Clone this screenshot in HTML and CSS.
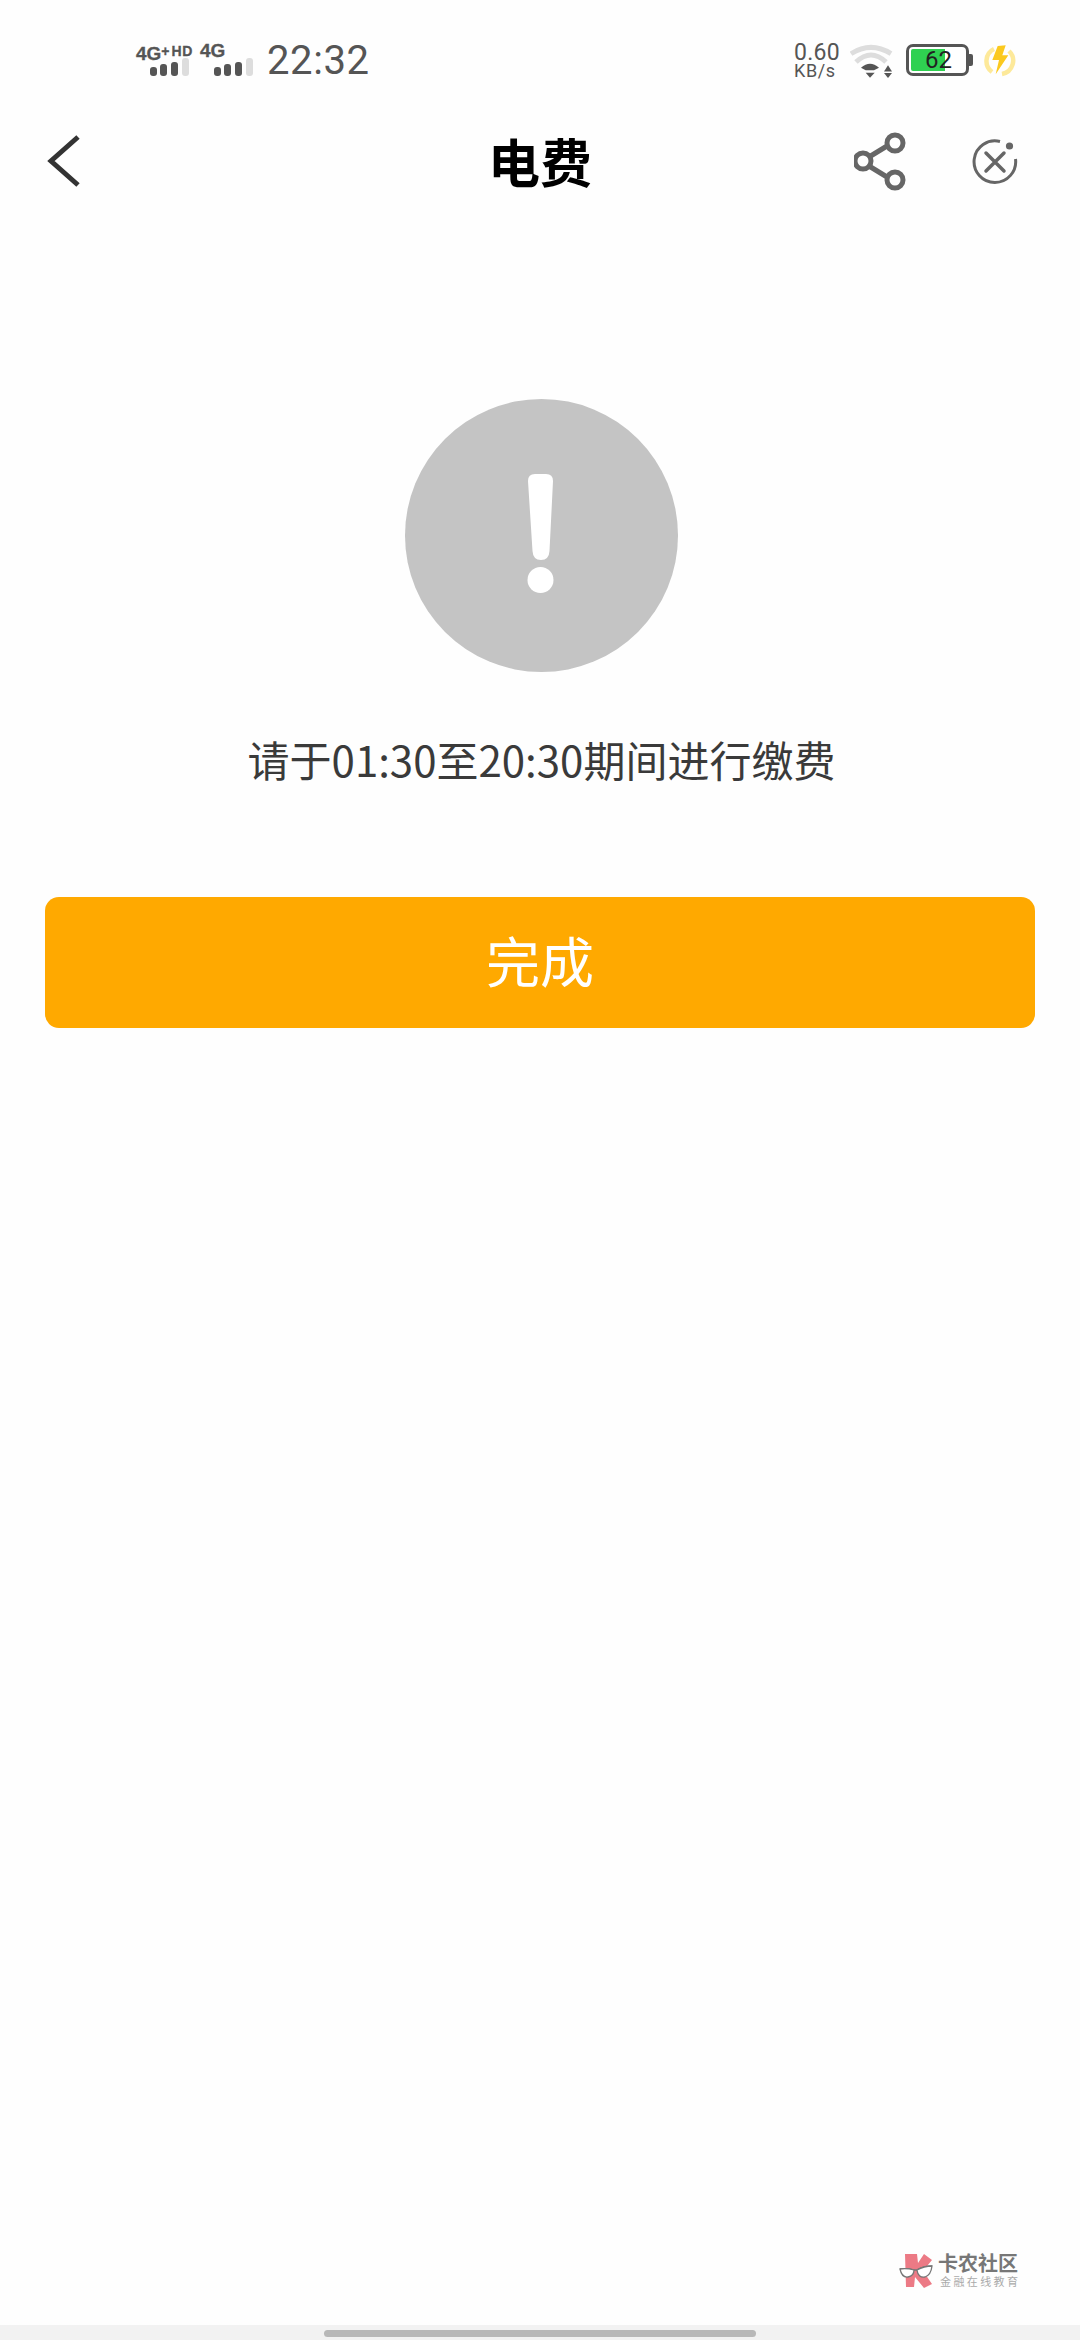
FILE: index.html
```html
<!DOCTYPE html>
<html lang="zh-CN">
<head>
<meta charset="utf-8">
<title>电费</title>
<link rel="stylesheet" href="styles.css">
</head>
<body>
<div class="page">
  <header class="status">
    <div class="status-left">
      <div class="sim sim-one">
        <div class="sim-label">4G<sup class="plus">+</sup><span class="hd">HD</span></div>
        <svg class="bars" width="42" height="18" viewBox="0 0 42 18"><rect x="0" y="9" width="7" height="9" rx="3" fill="#555"/><rect x="10" y="6" width="7" height="12" rx="3" fill="#555"/><rect x="21" y="4" width="7" height="14" rx="3" fill="#555"/><rect x="32" y="0" width="7" height="18" rx="3" fill="#ddd"/></svg>
      </div>
      <div class="sim sim-two">
        <div class="sim-label">4G</div>
        <svg class="bars" width="42" height="18" viewBox="0 0 42 18"><rect x="0" y="9" width="7" height="9" rx="3" fill="#555"/><rect x="10" y="6" width="7" height="12" rx="3" fill="#555"/><rect x="21" y="4" width="7" height="14" rx="3" fill="#555"/><rect x="32" y="0" width="7" height="18" rx="3" fill="#ddd"/></svg>
      </div>
      <div class="clock">22:32</div>
    </div>
    <div class="status-right">
      <div class="speed"><span class="speed-num">0.60</span><span class="speed-unit">KB/s</span></div>
      <svg class="wifi" width="44" height="36" viewBox="0 0 44 36">
        <path d="M1 11.700Q21 -1 41 11.700" fill="none" stroke="#ddd" stroke-width="5"/>
        <path d="M6 20Q21 6 36 20" fill="none" stroke="#ddd" stroke-width="5"/>
        <path d="M11 25.700Q20 18 29 25.700L24 28.300H15.700Z" fill="#555"/>
        <path d="M15.700 30.700H24.700L20 35.700Z" fill="#555"/>
        <path d="M38 23.300L42 29.500H34Z" fill="#555"/>
        <path d="M34 31H42L38 36Z" fill="#555"/>
      </svg>
      <div class="battery">
        <div class="battery-body"><div class="battery-fill"></div><span class="battery-num">62</span></div>
        <div class="battery-tip"></div>
      </div>
      <svg class="bolt" width="32" height="36" viewBox="0 0 32 36">
        <path d="M8 30A13.500 13.500 0 0 1 10 7" fill="none" stroke="#fde99a" stroke-width="4.500"/>
        <path d="M25 9A13.500 13.500 0 0 1 18 32" fill="none" stroke="#fde99a" stroke-width="4.500"/>
        <path d="M13.700 4L21.700 3.300L18.300 13.300H24.300L11.700 32.300L15 18H8.300Z" fill="#fbc91e"/>
      </svg>
    </div>
  </header>

  <nav class="nav">
    <svg class="nav-back" width="36" height="52" viewBox="0 0 36 52"><path d="M32 2L5 26L32 50" fill="none" stroke="#333" stroke-width="5"/></svg>
    <h1 class="nav-title">电费</h1>
    <div class="nav-actions">
      <svg class="nav-share" width="56" height="60" viewBox="0 0 56 60">
        <path d="M15 25L33 14M15 34L33 45" stroke="#666" stroke-width="5" fill="none"/>
        <circle cx="41" cy="11" r="8" fill="none" stroke="#666" stroke-width="5"/>
        <circle cx="9" cy="29" r="8" fill="none" stroke="#666" stroke-width="5"/>
        <circle cx="41" cy="48" r="8" fill="none" stroke="#666" stroke-width="5"/>
      </svg>
      <svg class="nav-close" width="48" height="48" viewBox="0 0 48 48">
        <path d="M29 3.500A20.800 20.800 0 1 0 44.500 21" fill="none" stroke="#666" stroke-width="3"/>
        <path d="M15 15L33 33M33 15L15 33" stroke="#666" stroke-width="3.500" fill="none" stroke-linecap="round"/>
        <circle cx="38.500" cy="8" r="3.600" fill="#666"/>
      </svg>
    </div>
  </nav>

  <main class="content">
    <div class="notice">
      <svg class="notice-icon" width="273" height="273" viewBox="0 0 273 273">
        <circle cx="136.500" cy="136.500" r="136.500" fill="#c4c4c4"/>
        <path d="M130 75H141Q148 75 148 82L144.500 152Q144 161 136 161Q128 161 127.500 152L123 82Q123 75 130 75Z" fill="#fff"/>
        <circle cx="135.500" cy="181" r="13" fill="#fff"/>
      </svg>
      <p class="notice-text">请于01:30至20:30期间进行缴费</p>
    </div>
    <button class="done" type="button">完成</button>
  </main>

  <div class="watermark">
    <svg class="wm-logo" width="36" height="38" viewBox="0 0 36 38">
      <path d="M6 3H18L19 12L25 3L33 9L24 20L33 33L25 37L16 26L15 36H7Z" fill="#ec7a85"/>
      <path d="M1 18Q8 17 15 19L18 19Q25 15 33 15" fill="none" stroke="#777" stroke-width="1.500"/>
      <path d="M1 18Q3 27 9 26Q15 25 15 19Q8 17 1 18ZM18 19Q19 27 26 26Q32 24 33 15Q25 15 18 19Z" fill="#fff" stroke="#777" stroke-width="1.300"/>
    </svg>
    <div class="wm-text">
      <span class="wm-main">卡农社区</span>
      <span class="wm-sub">金融在线教育</span>
    </div>
  </div>

  <footer class="gesture"><div class="gesture-handle"></div></footer>
</div>
</body>
</html>
```
FILE: styles.css
```css
* { box-sizing: border-box; }
html, body { margin: 0; padding: 0; }
body {
  width: 1080px;
  height: 2340px;
  overflow: hidden;
  background: #fefefe;
  font-family: "Noto Sans CJK SC", "Noto Sans", sans-serif;
}
.page {
  position: relative;
  width: 1080px;
  height: 2340px;
  display: flex;
  flex-direction: column;
}

/* status bar */
.status {
  height: 100px;
  padding: 39px 64px 0 136px;
  display: flex;
  justify-content: space-between;
  align-items: flex-start;
  color: #555;
}
.status-left, .status-right { display: flex; align-items: center; }
.status-left { height: 44px; }
.status-right { height: 44px; margin-top: -1px; }
.sim { display: flex; flex-direction: column; align-self: flex-start; margin-top: 2px; }
.sim-one { width: 64px; }
.sim-two { width: 67px; }
.sim-label {
  font-family: "Liberation Sans", sans-serif;
  font-weight: 700;
  font-size: 19px;
  line-height: 20px;
  height: 20px;
  white-space: nowrap;
  -webkit-text-stroke: 0.3px #555;
}
.plus { font-size: 14px; line-height: 0; vertical-align: 4px; }
.hd { font-size: 14px; margin-left: 2px; vertical-align: 4px; letter-spacing: .5px; }
.bars { display: block; margin: -3px 0 0 14px; }
.clock {
  font-family: "Roboto", sans-serif;
  font-size: 40px;
  line-height: 44px;
  color: #555;
  letter-spacing: .6px;
}
.speed { display: flex; flex-direction: column; align-items: flex-start; width: 56px; }
.speed-num { font-family: "Roboto", sans-serif; font-size: 23px; line-height: 20px; letter-spacing: .3px; }
.speed-unit { font-family: "Roboto", sans-serif; font-size: 18px; line-height: 15px; letter-spacing: .6px; }
.wifi { display: block; margin-right: 12px; }
.battery { display: flex; align-items: center; margin-right: 11px; }
.battery-body {
  position: relative;
  width: 63px;
  height: 32px;
  border: 3px solid #555;
  border-radius: 7px;
  background: #fff;
  padding: 2px;
  display: flex;
}
.battery-fill { width: 34px; background: #2fd151; border-radius: 2px 0 0 2px; }
.battery-num {
  position: absolute;
  left: 16px;
  top: 0;
  font-family: "Roboto", sans-serif;
  font-size: 24px;
  line-height: 26px;
  color: #222;
}
.battery-tip { width: 4px; height: 12px; background: #555; border-radius: 0 2px 2px 0; }
.bolt { display: block; }

/* nav bar */
.nav {
  height: 120px;
  padding: 0 61px 0 46px;
  display: flex;
  align-items: center;
  justify-content: space-between;
  position: relative;
}
.nav-back { display: block; margin-top: 2px; }
.nav-title {
  position: absolute;
  left: 0;
  right: 0;
  top: 31px;
  margin: 0;
  text-align: center;
  font-size: 52px;
  line-height: 60px;
  font-weight: 700;
  color: #000;
}
.nav-actions { display: flex; align-items: center; gap: 61px; margin-top: 4px; }
.nav-share, .nav-close { display: block; }

/* content */
.content {
  flex: 1;
  padding: 179px 45px 0;
  display: flex;
  flex-direction: column;
}
.notice {
  display: flex;
  flex-direction: column;
  align-items: center;
  padding-left: 3px;
}
.notice-icon { display: block; }
.notice-text {
  margin: 56px 0 0;
  font-size: 42px;
  line-height: 62px;
  color: #3a3a3a;
  white-space: nowrap;
}
.done {
  margin-top: 107px;
  width: 990px;
  height: 131px;
  border: 0;
  border-radius: 14px;
  background: #ffa900;
  color: #fff;
  font-family: inherit;
  font-size: 54px;
  padding: 0 0 6px;
}

/* watermark */
.watermark {
  position: absolute;
  left: 899px;
  top: 2251px;
  display: flex;
  align-items: flex-start;
  gap: 3px;
}
.wm-logo { display: block; }
.wm-text { display: flex; flex-direction: column; align-items: flex-start; }
.wm-main { font-size: 20px; line-height: 24px; font-weight: 700; color: #777; white-space: nowrap; }
.wm-sub { font-size: 11px; line-height: 13px; color: #aaa; letter-spacing: 2.400px; margin-left: 2px; white-space: nowrap; }

/* gesture bar */
.gesture {
  height: 15px;
  background: #f2f2f2;
  padding-top: 5px;
  display: flex;
  justify-content: center;
}
.gesture-handle { width: 432px; height: 7px; border-radius: 4px; background: #b8b8b8; }
```
